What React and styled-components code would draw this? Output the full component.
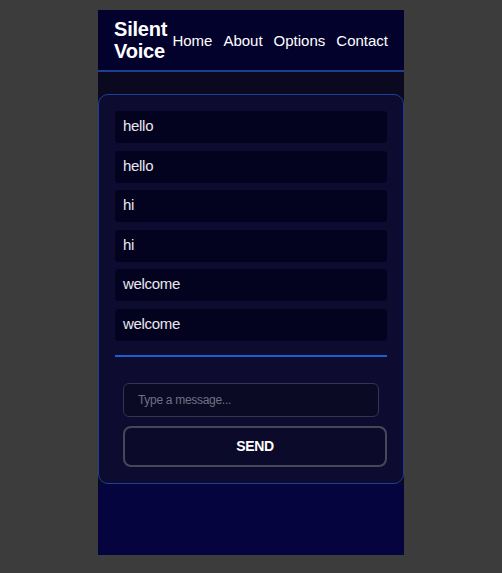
import styled, { createGlobalStyle } from "styled-components";

const GlobalStyle = createGlobalStyle`
  body {
    margin: 0;
    background: #3c3c3c;
    font-family: "Liberation Sans", Arial, sans-serif;
  }
`;

const Page = styled.div`
  padding-top: 10px;
`;

const Phone = styled.div`
  width: 306px;
  height: 545px;
  margin: 0 auto;
  background: #05043e;
  display: flex;
  flex-direction: column;
`;

const Header = styled.header`
  height: 60px;
  flex-shrink: 0;
  background: #03022d;
  border-bottom: 2px solid #1c3f8f;
  display: flex;
  align-items: center;
  justify-content: space-between;
  padding: 0 16px;
`;

const Logo = styled.div`
  color: #fff;
  font-weight: 700;
  font-size: 20px;
  line-height: 22px;
  letter-spacing: -0.2px;
`;

const Nav = styled.nav`
  display: flex;
  gap: 11px;
  a {
    color: #fff;
    text-decoration: none;
    font-size: 15px;
  }
`;

const Main = styled.main`
  background: #0a0920;
  padding-top: 22px;
`;

const Card = styled.section`
  border: 1px solid #1d3f9a;
  border-radius: 10px;
  background: #0d0b2f;
  padding: 16px;
`;

const MessageList = styled.div`
  display: flex;
  flex-direction: column;
  gap: 7.6px;
`;

const Message = styled.div`
  background: #03021f;
  border-radius: 4px;
  padding: 5px 8px 7px;
  line-height: 20px;
  font-size: 15px;
  letter-spacing: -0.3px;
  color: #e8e8ee;
`;

const Divider = styled.hr`
  border: none;
  height: 2px;
  background: #1f5fc9;
  margin: 14px 0 0;
`;

const Form = styled.form`
  display: flex;
  flex-direction: column;
  gap: 9px;
  margin-top: 26px;
  padding-left: 8px;
`;

const Input = styled.input`
  height: 34px;
  box-sizing: border-box;
  margin-right: 8px;
  border: 1px solid #34344f;
  border-radius: 6px;
  background: #0b0a24;
  padding: 0 14px;
  color: #fff;
  font-family: "Liberation Sans", Arial, sans-serif;
  font-size: 12px;
  letter-spacing: -0.3px;
  outline: none;
  &::placeholder {
    color: #707084;
  }
`;

const SendButton = styled.button`
  height: 41px;
  border: 2px solid #474757;
  border-radius: 8px;
  background: #0c0a2a;
  color: #fff;
  font-family: "Liberation Sans", Arial, sans-serif;
  font-weight: 700;
  font-size: 14px;
  letter-spacing: -0.4px;
`;

const messages = ["hello", "hello", "hi", "hi", "welcome", "welcome"];

export default function App() {
  return (
    <>
      <GlobalStyle />
      <Page>
        <Phone>
          <Header>
            <Logo>
              Silent
              <br />
              Voice
            </Logo>
            <Nav>
              <a href="#">Home</a>
              <a href="#">About</a>
              <a href="#">Options</a>
              <a href="#">Contact</a>
            </Nav>
          </Header>
          <Main>
            <Card>
              <MessageList>
                {messages.map((m, i) => (
                  <Message key={i}>{m}</Message>
                ))}
              </MessageList>
              <Divider />
              <Form onSubmit={(e) => e.preventDefault()}>
                <Input placeholder="Type a message..." />
                <SendButton type="submit">SEND</SendButton>
              </Form>
            </Card>
          </Main>
        </Phone>
      </Page>
    </>
  );
}
